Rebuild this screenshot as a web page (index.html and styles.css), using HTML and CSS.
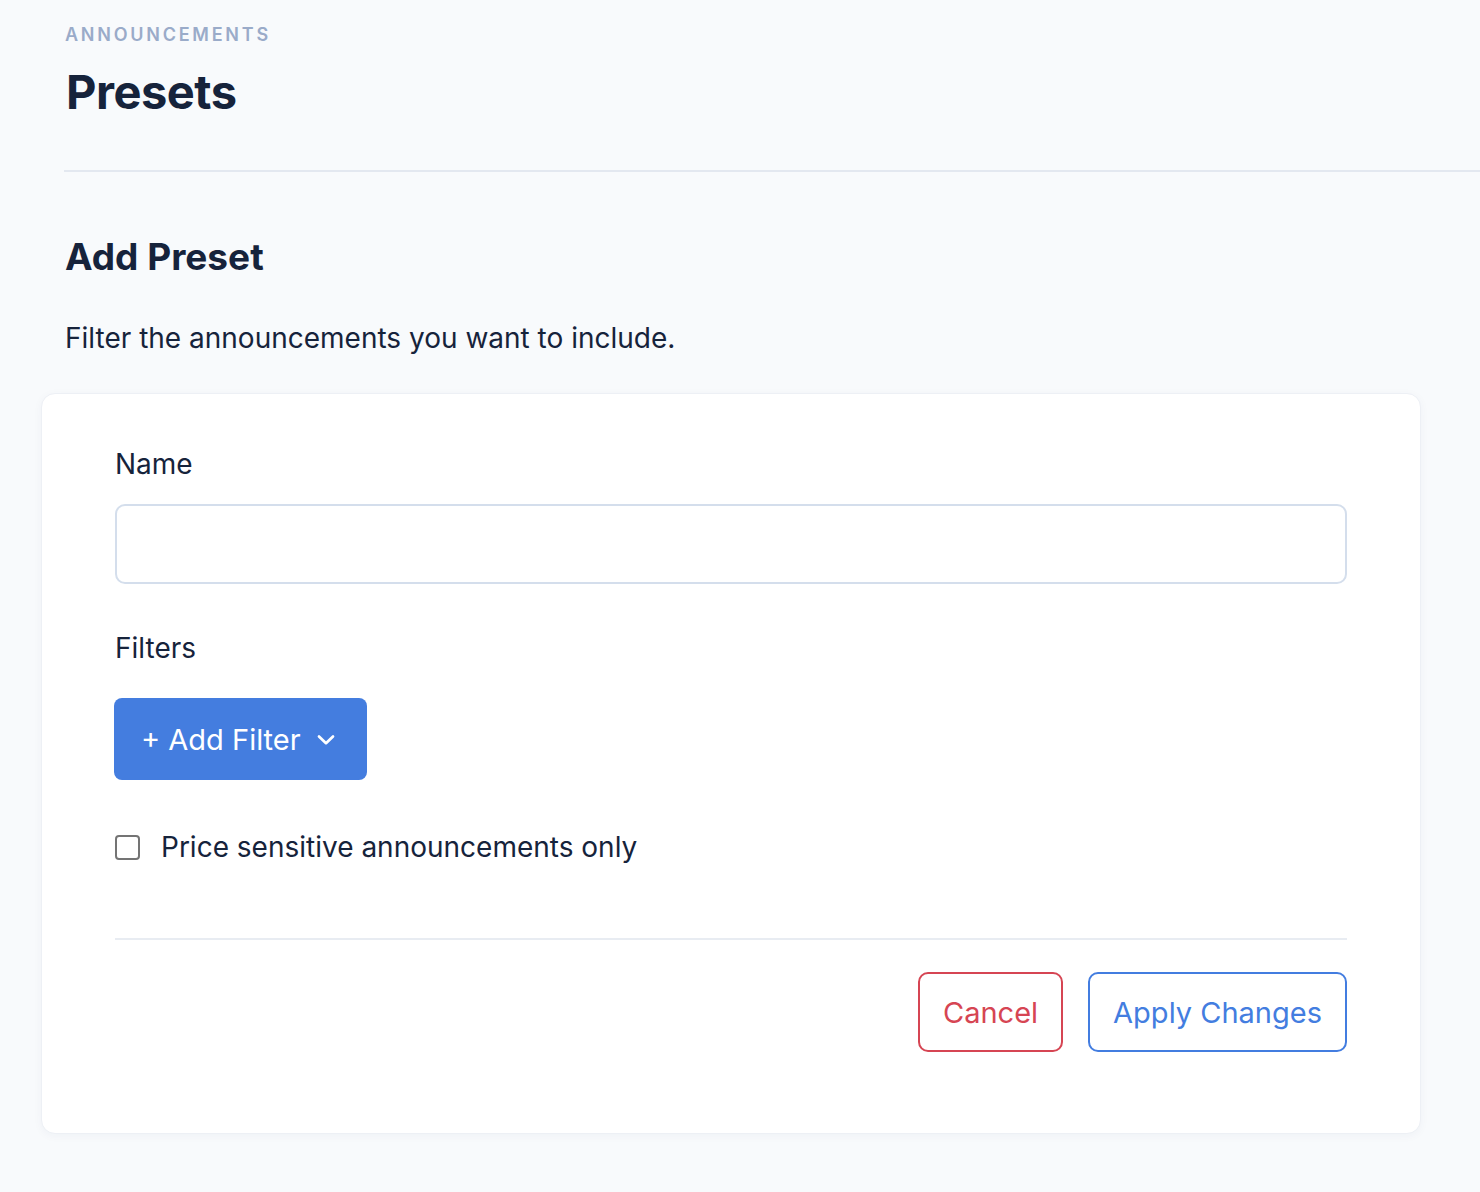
FILE: index.html
```html
<!DOCTYPE html>
<html>
<head>
<meta charset="utf-8">
<title>Presets</title>
<link rel="stylesheet" href="styles.css">
</head>
<body>
<div class="top">
  <div class="eyebrow">ANNOUNCEMENTS</div>
  <h1 class="title">Presets</h1>
</div>
<div class="main">
  <h2 class="sub">Add Preset</h2>
  <p class="lead">Filter the announcements you want to include.</p>
  <div class="card">
    <label class="lbl" for="name">Name</label>
    <input class="inp" id="name" type="text">
    <div class="lbl lbl-filters">Filters</div>
    <button class="btn-add">+ Add Filter
      <svg class="chev" width="20" height="12" viewBox="0 0 20 12"><path d="M3 2.5L10 9.2L17 2.5" fill="none" stroke="#fff" stroke-width="2.7" stroke-linecap="round" stroke-linejoin="round"/></svg>
    </button>
    <label class="check"><span class="box"></span>Price sensitive announcements only</label>
    <div class="foot">
      <button class="btn btn-cancel">Cancel</button>
      <button class="btn btn-apply">Apply Changes</button>
    </div>
  </div>
</div>
</body>
</html>
```

FILE: styles.css
```css
*{box-sizing:border-box;}
body{margin:0;background:#f8fafc;font-family:Inter,"Liberation Sans",sans-serif;color:#16233b;}
.top{margin-left:64px;padding-top:24px;padding-bottom:48px;border-bottom:2px solid #e3e8f0;}
.eyebrow{font-size:18px;letter-spacing:2.75px;color:#9aabc9;font-weight:600;line-height:22px;padding-left:1px;}
.title{margin:16px 0 0 2px;font-size:47px;line-height:60px;font-weight:700;letter-spacing:-0.5px;}
.main{padding:0 60px 60px 41px;}
.sub{margin:62px 0 0 24px;font-size:37px;line-height:46px;font-weight:700;}
.lead{margin:40px 0 0 24px;font-size:28px;line-height:36px;}
.card{margin-top:37px;width:1380px;background:#fff;border:1px solid #edf0f5;border-radius:14px;box-shadow:0 2px 10px rgba(30,50,90,0.04);padding:50px 73px 81px 73px;}
.lbl{display:block;font-size:28px;line-height:40px;}
.inp{display:block;width:100%;height:80px;margin-top:20px;border:2px solid #d4deec;border-radius:10px;background:#fff;}
.lbl-filters{margin-top:44px;}
.btn-add{margin-top:30px;margin-left:-1px;display:flex;align-items:center;height:82px;padding:0 31px 0 27px;background:#447ddf;color:#fff;border:0;border-radius:8px;font-family:inherit;font-size:29px;}
.chev{margin-left:15px;margin-top:2px;}
.check{display:flex;align-items:center;margin-top:49px;font-size:28px;line-height:36px;}
.box{width:25px;height:25px;border:2px solid #747474;border-radius:4px;margin-right:21px;}
.foot{margin-top:73px;border-top:2px solid #e8ecf2;padding-top:32px;display:flex;justify-content:flex-end;gap:25px;}
.btn{height:80px;background:#fff;border:2px solid;border-radius:10px;font-family:inherit;font-size:29px;padding:0 23px;}
.btn-cancel{border-color:#d64553;color:#d64553;}
.btn-apply{border-color:#437de0;color:#437de0;}
```
